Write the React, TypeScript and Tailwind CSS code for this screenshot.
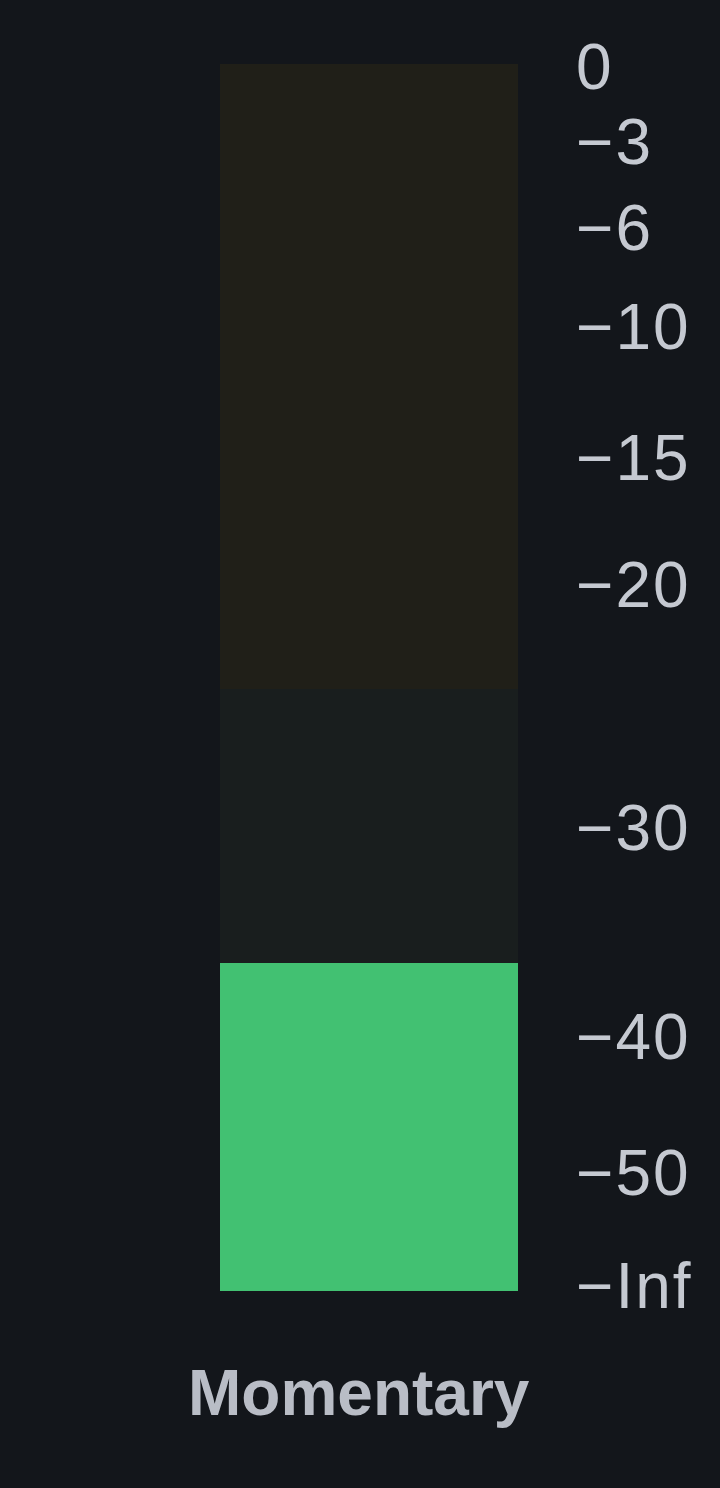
import React from "react"

// dB marks on the meter scale, with their offset from the top of the bar (px)
const scaleMarks: { label: string; offset: number }[] = [
    { label: "0", offset: 3 },
    { label: "\u22123", offset: 78 },
    { label: "\u22126", offset: 164 },
    { label: "\u221210", offset: 263 },
    { label: "\u221215", offset: 394 },
    { label: "\u221220", offset: 521 },
    { label: "\u221230", offset: 764 },
    { label: "\u221240", offset: 973 },
    { label: "\u221250", offset: 1109 },
    { label: "\u2212Inf", offset: 1222 },
]

const font = { fontFamily: '"Liberation Sans", Arial, sans-serif' }

function LevelBar() {
    return (
        <div className="flex h-[1227px] w-[298px] flex-col">
            {/* warning zone */}
            <div className="h-[625px] bg-[#201f18]" />
            {/* normal zone, filled from the bottom */}
            <div className="flex flex-1 flex-col justify-end bg-[#191e1e]">
                <div className="h-[328px] bg-[#42c172]" />
            </div>
        </div>
    )
}

function Scale() {
    return (
        <div className="relative ml-[44px] h-[1227px] w-[150px]">
            {scaleMarks.map((mark) => (
                <span
                    key={mark.label}
                    className="absolute left-0 -translate-y-1/2 whitespace-nowrap text-[64px] leading-none tracking-[2px] text-[#c5c9d1]"
                    style={{ top: mark.offset }}
                >
                    {mark.label}
                </span>
            ))}
        </div>
    )
}

export default function App() {
    return (
        <div className="min-h-screen w-full bg-[#13161b] pt-[64px] pl-[220px]" style={font}>
            <div className="flex">
                <div className="flex flex-col">
                    <LevelBar />
                    <div className="-ml-[32px] mt-[70px] w-[344px] text-[64px] font-bold leading-none text-[#b9bdc6]">
                        Momentary
                    </div>
                </div>
                <Scale />
            </div>
        </div>
    )
}
